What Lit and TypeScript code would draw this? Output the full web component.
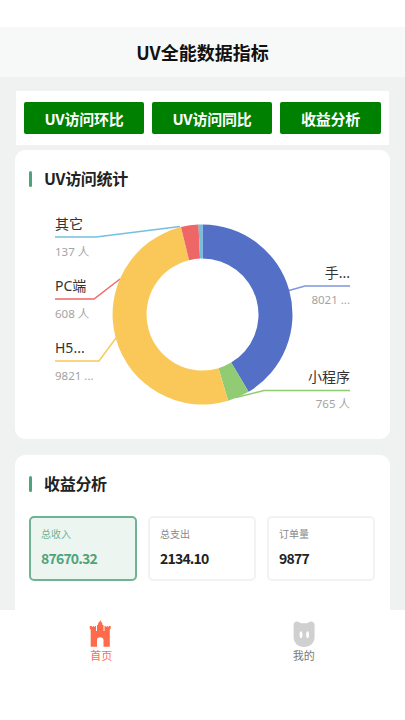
import { LitElement, html, css, svg } from "lit";
import { customElement } from "lit/decorators.js";

const CX = 202.5, CY = 314.5, R = 90, r = 56;
const slices = [
  { v: 8021, c: "#5470c6" },
  { v: 765, c: "#91cc75" },
  { v: 9821, c: "#fac858" },
  { v: 608, c: "#ee6666" },
  { v: 137, c: "#73c0de" },
];
const labels = [
  { name: "其它", val: "137 人", c: "#73c0de", pts: "55,237 96,237 180,226.5", x: 55, a: "start", ny: 229, vy: 255.500 },
  { name: "PC端", val: "608 人", c: "#ee6666", pts: "55,299 94,299 120,279", x: 55, a: "start", ny: 291, vy: 317.500 },
  { name: "H5...", val: "9821 ...", c: "#fac858", pts: "55,361 99,361 116,338", x: 55, a: "start", ny: 353, vy: 379.500 },
  { name: "手...", val: "8021 ...", c: "#7f95e0", pts: "350,286 305,286 289,290.5", x: 350, a: "end", ny: 278, vy: 304 },
  { name: "小程序", val: "765 人", c: "#91cc75", pts: "350,390.5 264,390.5 236,397.5", x: 350, a: "end", ny: 382, vy: 408 },
];

function arc(a0: number, a1: number) {
  const p = (rad: number, a: number) =>
    `${(CX + rad * Math.sin(a)).toFixed(2)} ${(CY - rad * Math.cos(a)).toFixed(2)}`;
  const large = a1 - a0 > Math.PI ? 1 : 0;
  return `M${p(R, a0)}A${R} ${R} 0 ${large} 1 ${p(R, a1)}L${p(r, a1)}A${r} ${r} 0 ${large} 0 ${p(r, a0)}Z`;
}

@customElement("app-root")
export class AppRoot extends LitElement {
  static styles = css`
    :host {
      display: block;
      position: relative;
      width: 405px;
      height: 720px;
      overflow: hidden;
      background: #f0f2f1;
      font-family: "Noto Sans CJK SC", "Noto Sans", sans-serif;
      color: #1a1a1a;
    }
    .status { height: 27px; background: #fff; }
    .header {
      height: 50px;
      background: #f7f8f8;
      display: flex;
      align-items: center;
      justify-content: center;
      font-size: 18px;
      font-weight: 700;
      color: #111;
    }
    .actions {
      margin: 14px 16px 0;
      height: 54px;
      box-sizing: border-box;
      padding: 11px 8px;
      background: #fff;
      display: grid;
      grid-template-columns: 120px 120px 101px;
      gap: 8px;
    }
    .actions div {
      background: #008000;
      border-radius: 2px;
      color: #fff;
      font-size: 15px;
      font-weight: 700;
      letter-spacing: -0.2px;
      display: flex;
      align-items: center;
      justify-content: center;
    }
    .card {
      margin: 5px 15px 0;
      background: #fff;
      border-radius: 10px;
      box-sizing: border-box;
      padding: 20px 14px;
    }
    .chart-card { height: 289px; padding-bottom: 0; }
    .income { margin-top: 16px; height: 260px; }
    .title {
      display: flex;
      align-items: center;
      gap: 12px;
      height: 17px;
      font-size: 16px;
      font-weight: 700;
      letter-spacing: -0.3px;
      color: #222;
    }
    .title span { position: relative; top: -1px; }
    .title i {
      width: 3px;
      height: 16px;
      border-radius: 1.5px;
      background: #4ea37c;
    }
    .stats {
      margin-top: 24px;
      display: grid;
      grid-template-columns: repeat(3, 108px);
      gap: 11px;
    }
    .stat {
      height: 65px;
      box-sizing: border-box;
      border: 2px solid #f1f3f2;
      border-radius: 5px;
      padding: 8px 10px;
      background: #fff;
    }
    .stat small { display: block; font-size: 10px; line-height: 15px; color: #888; }
    .stat b {
      display: block;
      margin-top: 8px;
      font-size: 14px;
      line-height: 18px;
      font-weight: 700;
      letter-spacing: -0.8px;
      color: #222;
    }
    .stat.on { border-color: #6fb394; background: #edf5f1; }
    .stat.on small { color: #6fb394; }
    .stat.on b { color: #4ea37c; }
    .pie { position: absolute; left: 0; top: 0; width: 405px; height: 720px; pointer-events: none; }
    .pie text { font-family: "Noto Sans", "Noto Sans CJK SC", sans-serif; }
    .pie .n { font-size: 14px; fill: #333; }
    .pie .v { font-size: 11.5px; fill: #a3a3a3; }
    .tabs {
      position: absolute;
      left: 0;
      right: 0;
      top: 610px;
      bottom: 0;
      background: #fff;
      display: grid;
      grid-template-columns: 1fr 1fr;
    }
    .tab {
      display: flex;
      flex-direction: column;
      align-items: center;
      padding-top: 9px;
      font-size: 11px;
      line-height: 16px;
      color: #777;
    }
    .tab.on { color: #ff6b4a; }
    .tab svg { display: block; width: 28px; height: 28px; }
  `;

  private pie() {
    const total = slices.reduce((s, x) => s + x.v, 0);
    let a = 0;
    const arcs = slices.map((s) => {
      const a0 = a;
      a += (s.v / total) * Math.PI * 2;
      return svg`<path d=${arc(a0, a)} fill=${s.c}></path>`;
    });
    return html`<svg class="pie" viewBox="0 0 405 720">
      ${labels.map((l) => svg`<polyline points=${l.pts} fill="none" stroke=${l.c} stroke-width="1.4"></polyline>`)}
      ${arcs}
      ${labels.map(
        (l) => svg`<text class="n" x=${l.x} y=${l.ny} text-anchor=${l.a}>${l.name}</text>
          <text class="v" x=${l.x} y=${l.vy} text-anchor=${l.a}>${l.val}</text>`
      )}
    </svg>`;
  }

  render() {
    return html`
      <div class="status"></div>
      <div class="header">UV全能数据指标</div>
      <div class="actions">
        <div>UV访问环比</div>
        <div>UV访问同比</div>
        <div>收益分析</div>
      </div>
      <section class="card chart-card">
        <div class="title"><i></i><span>UV访问统计</span></div>
      </section>
      <section class="card income">
        <div class="title"><i></i><span>收益分析</span></div>
        <div class="stats">
          <div class="stat on"><small>总收入</small><b>87670.32</b></div>
          <div class="stat"><small>总支出</small><b>2134.10</b></div>
          <div class="stat"><small>订单量</small><b>9877</b></div>
        </div>
      </section>
      ${this.pie()}
      <nav class="tabs">
        <div class="tab on">
          <svg viewBox="0 0 28 28">
            <path
              fill="#ff6b4a"
              fill-rule="evenodd"
              d="M13.250 1L14.100 3L15 3.600L15.600 6H16.500V12H17.500V7H18.700V8H19.600V7H20.800V8H21.700V7H23.750V9.500L22.800 10.500V27.800H3.700V10.500L2.750 9.500V7H4.800V8H5.700V7H6.900V8H7.800V7H9V12H10V6H10.900L11.500 3.600L12.400 3ZM10 27.800H16.500V21.500a3.250 3.250 0 0 0-6.500 0Z"
            ></path>
          </svg>
          <span>首页</span>
        </div>
        <div class="tab">
          <svg viewBox="0 0 28 28">
            <path
              fill="#d0d0d0"
              fill-rule="evenodd"
              d="M3.600 6C3.600 3.500 5.500 2 7.500 2.500 9 3 10 4.300 11.500 4.300h5C18 4.300 19 3 20.500 2.500 22.500 2 24.600 3.500 24.600 6V18c0 6-4.500 10-10.500 10S3.600 24 3.600 18zM11 12.300c-.9 0-1.400 1.500-1.400 3.400s.5 3.400 1.400 3.400 1.400-1.500 1.400-3.400-.5-3.400-1.400-3.400zm6.600 0c-.9 0-1.400 1.500-1.400 3.400s.5 3.400 1.400 3.400 1.400-1.500 1.400-3.400-.5-3.400-1.400-3.400z"
            ></path>
          </svg>
          <span>我的</span>
        </div>
      </nav>
    `;
  }
}
